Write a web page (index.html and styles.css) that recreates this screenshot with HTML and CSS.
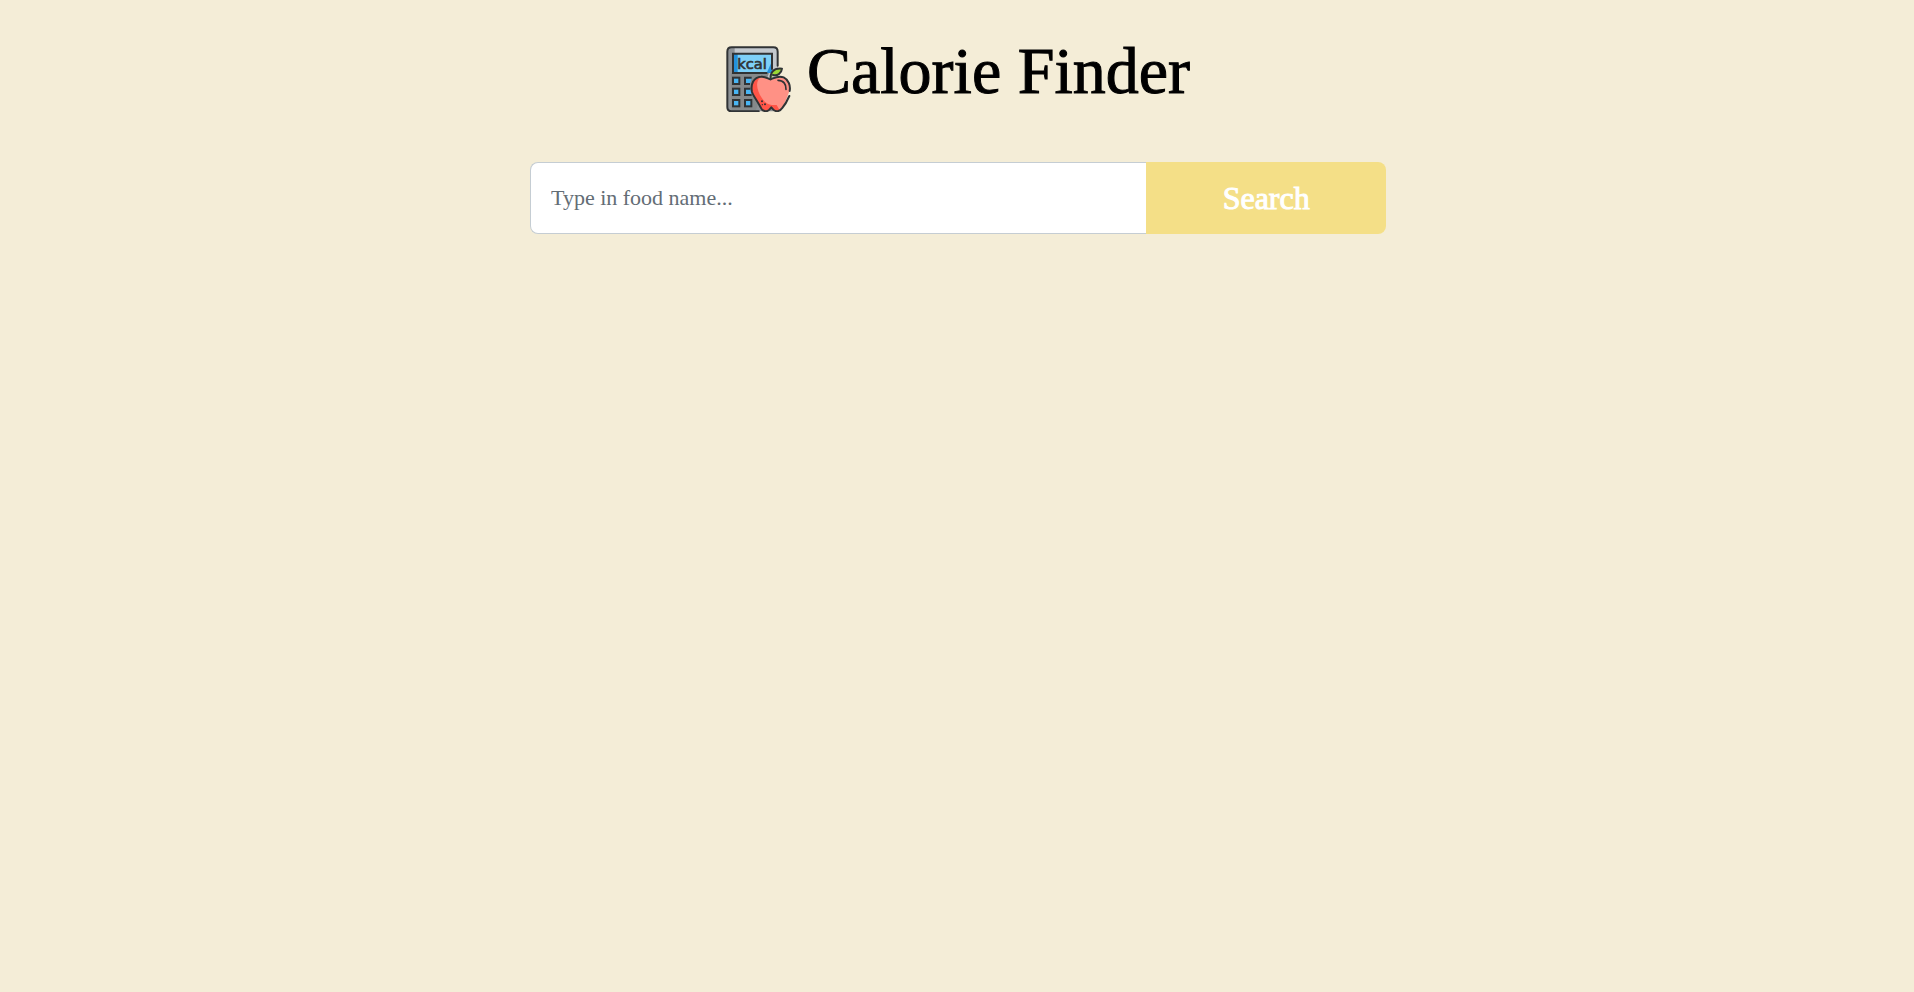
FILE: index.html
```html
<!DOCTYPE html>
<html lang="en">
<head>
<meta charset="utf-8">
<meta name="viewport" content="width=device-width, initial-scale=1">
<title>Calorie Finder</title>
<link rel="stylesheet" href="styles.css">
</head>
<body>
<main class="page">
  <header class="brand">
    <svg class="brand-icon" viewBox="21 16 198 198" aria-hidden="true">
      <!-- calculator body -->
      <rect x="25" y="20" width="151" height="192" rx="13" fill="#8e9296"/>
      <path d="M47 20H164Q176 20 176 33V125H47Z" fill="#c3c9ce"/>
      <path d="M36 97H150L110 210H38Z" fill="#85898b"/>
      <path d="M176 75V33Q176 20 163 20H38Q25 20 25 33V199Q25 212 38 212H119" fill="none" stroke="#303335" stroke-width="6" stroke-linecap="round" stroke-linejoin="round"/>
      <!-- display -->
      <rect x="42" y="39" width="117" height="58" fill="#7ed0f8"/>
      <path d="M42 39H56V97H42Z" fill="#2491dc"/>
      <path d="M143 97L159 62V97Z" fill="#2491dc"/>
      <path d="M159 87V39H42V97H145" fill="none" stroke="#303335" stroke-width="6"/>
      <text class="brand-display" x="55" y="84">kcal</text>
      <!-- keys -->
      <g fill="#48b5f4" stroke="#303335" stroke-width="6">
        <rect x="42" y="111" width="19" height="19"/>
        <rect x="42" y="144" width="19" height="19"/>
        <rect x="42" y="178" width="19" height="19"/>
        <rect x="78" y="178" width="19" height="19"/>
        <path d="M98 111H78V130H93"/>
        <path d="M94 144H78V163H98"/>
      </g>
      <!-- apple -->
      <path d="M99 154C94 131 104 109 126 108C139 107 147 114 155 116C164 113 177 103 194 110C210 117 216 132 211 151C207 166 195 192 188 204C183 213 170 214 163 207L157 200L151 207C143 215 130 212 126 202C116 182 104 168 99 154Z" fill="#ff9185"/>
      <path d="M99 154C94 131 104 109 125 110C107 122 114 151 129 173C140 188 147 195 173 193L182 209C174 213 165 210 157 200C149 213 131 213 126 202C116 182 104 168 99 154Z" fill="#ff5548"/>
      <path d="M211 166C205 180 196 195 189 203C183 213 170 214 163 207L157 200L151 207C143 215 130 212 126 202C116 182 104 168 99 154C94 131 104 109 126 108C139 107 147 114 155 116C164 113 177 103 194 110C209 117 215 135 212 151" fill="none" stroke="#303335" stroke-width="6" stroke-linecap="round" stroke-linejoin="round"/>
      <path d="M177 119C193 119 202 130 201 146" fill="none" stroke="#303335" stroke-width="5" stroke-linecap="round"/>
      <path d="M155 116C154 107 155 99 161 92C168 84 178 83 189 84C187 100 175 106 162 103" fill="#9bd735" stroke="#303335" stroke-width="6" stroke-linecap="round" stroke-linejoin="round"/>
      <g fill="#303335"><circle cx="129" cy="182" r="3"/><circle cx="138" cy="191" r="3"/><circle cx="130" cy="192" r="2"/></g>
    </svg>
    <h1 class="brand-title">Calorie Finder</h1>
  </header>
  <form class="search" role="search">
    <input class="search-input" type="text" name="food" placeholder="Type in food name..." aria-label="Food name">
    <button class="search-button" type="submit">Search</button>
  </form>
</main>
</body>
</html>
```
FILE: styles.css
```css
* {
  box-sizing: border-box;
}

body {
  margin: 0;
  min-height: 100vh;
  background: #f4edd7;
  color: #000;
  font-family: "Liberation Serif", serif;
}

.page {
  display: flex;
  flex-direction: column;
  align-items: center;
  gap: 50px;
  padding: 34px 15px 34px 17px;
}

.brand {
  display: flex;
  align-items: flex-start;
  gap: 15px;
}

.brand-icon {
  flex: none;
  width: 66px;
  height: 66px;
  margin-top: 12px;
}

.brand-display {
  font-family: "DejaVu Sans", sans-serif;
  font-size: 44px;
  fill: #303335;
  stroke: #303335;
  stroke-width: 2px;
}

.brand-title {
  margin: 0;
  font-size: 66px;
  font-weight: 400;
  line-height: 74px;
  -webkit-text-stroke: 1px currentColor;
}

.search {
  display: flex;
  width: 100%;
  max-width: 856px;
}

.search-input {
  flex: 1;
  min-width: 0;
  padding: 20px;
  border: 1px solid #c5cdd3;
  border-right: 0;
  border-radius: 8px 0 0 8px;
  background: #fff;
  color: #212529;
  font: 22px/30px "Liberation Serif", serif;
}

.search-input::placeholder {
  color: #636d75;
  opacity: 1;
}

.search-button {
  flex: 0 0 28%;
  padding: 16px;
  border: 0;
  border-radius: 0 8px 8px 0;
  background: #f4df87;
  color: #fff;
  font: 32px/40px "Liberation Serif", serif;
  -webkit-text-stroke: 1px currentColor;
  cursor: pointer;
}
```
